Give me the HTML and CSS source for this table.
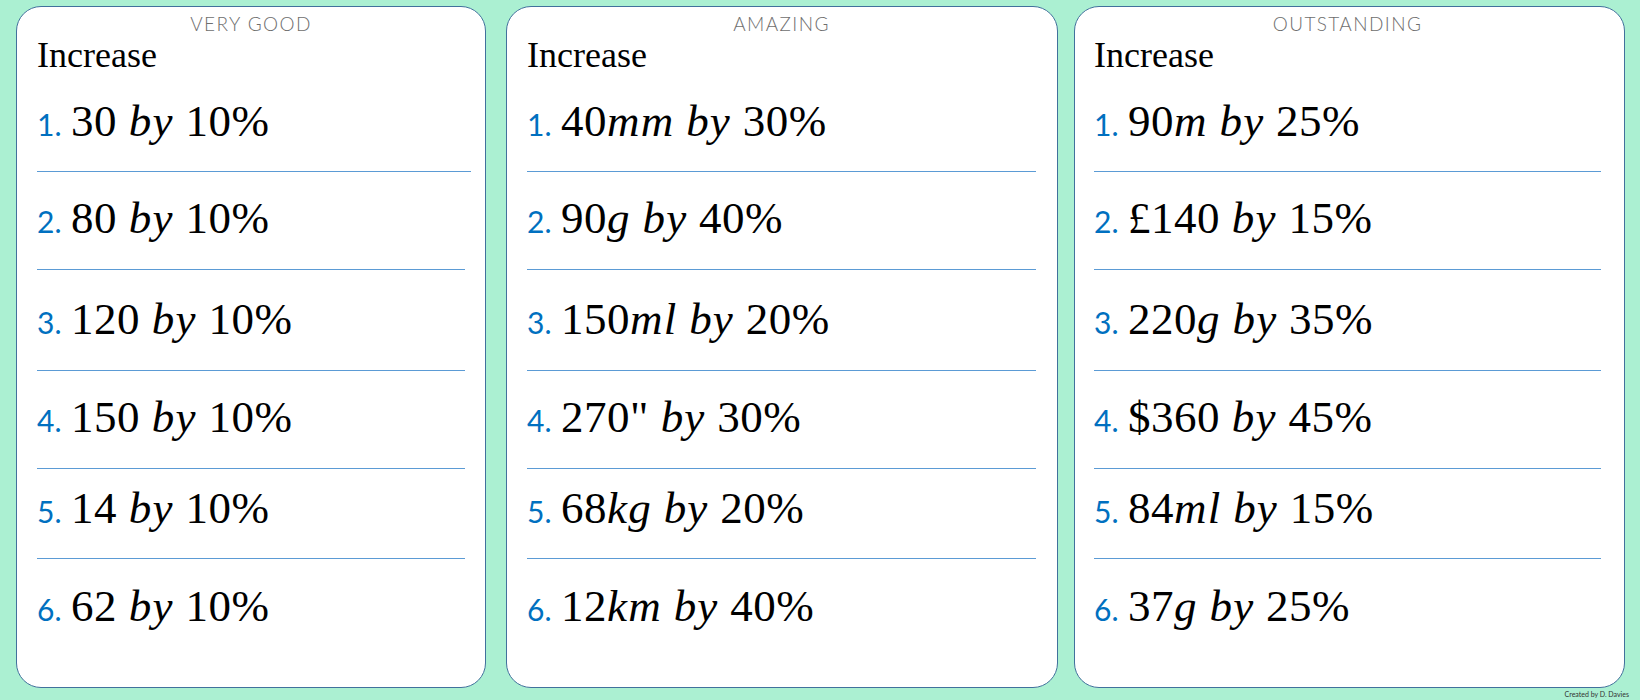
FILE: index.html
```html
<!DOCTYPE html>
<html lang="en">
<head>
<meta charset="utf-8">
<title>Increase by a percentage</title>
<link rel="stylesheet" href="styles.css">
</head>
<body>
<main class="sheet">
  <div class="cards">
    <section class="card card-1">
      <h2 class="level">VERY GOOD</h2>
      <p class="prompt">Increase</p>
      <ol class="rows">
        <li class="row"><span class="num">1.</span><span class="expr">30 <i>by</i> 10%</span></li>
        <li class="row"><span class="num">2.</span><span class="expr">80 <i>by</i> 10%</span></li>
        <li class="row"><span class="num">3.</span><span class="expr">120 <i>by</i> 10%</span></li>
        <li class="row"><span class="num">4.</span><span class="expr">150 <i>by</i> 10%</span></li>
        <li class="row"><span class="num">5.</span><span class="expr">14 <i>by</i> 10%</span></li>
        <li class="row"><span class="num">6.</span><span class="expr">62 <i>by</i> 10%</span></li>
      </ol>
    </section>
    <section class="card card-2">
      <h2 class="level">AMAZING</h2>
      <p class="prompt">Increase</p>
      <ol class="rows">
        <li class="row"><span class="num">1.</span><span class="expr">40<i>mm</i> <i>by</i> 30%</span></li>
        <li class="row"><span class="num">2.</span><span class="expr">90<i>g</i> <i>by</i> 40%</span></li>
        <li class="row"><span class="num">3.</span><span class="expr">150<i>ml</i> <i>by</i> 20%</span></li>
        <li class="row"><span class="num">4.</span><span class="expr">270" <i>by</i> 30%</span></li>
        <li class="row"><span class="num">5.</span><span class="expr">68<i>kg</i> <i>by</i> 20%</span></li>
        <li class="row"><span class="num">6.</span><span class="expr">12<i>km</i> <i>by</i> 40%</span></li>
      </ol>
    </section>
    <section class="card card-3">
      <h2 class="level">OUTSTANDING</h2>
      <p class="prompt">Increase</p>
      <ol class="rows">
        <li class="row"><span class="num">1.</span><span class="expr">90<i>m</i> <i>by</i> 25%</span></li>
        <li class="row"><span class="num">2.</span><span class="expr">£140 <i>by</i> 15%</span></li>
        <li class="row"><span class="num">3.</span><span class="expr">220<i>g</i> <i>by</i> 35%</span></li>
        <li class="row"><span class="num">4.</span><span class="expr">$360 <i>by</i> 45%</span></li>
        <li class="row"><span class="num">5.</span><span class="expr">84<i>ml</i> <i>by</i> 15%</span></li>
        <li class="row"><span class="num">6.</span><span class="expr">37<i>g</i> <i>by</i> 25%</span></li>
      </ol>
    </section>
  </div>
  <footer class="credit">Created by D. Davies</footer>
</main>
</body>
</html>
```

FILE: styles.css
```css
html, body {
  margin: 0;
  padding: 0;
}

body {
  width: 1640px;
  height: 700px;
  overflow: hidden;
  background: #abf0d2;
  font-family: "Liberation Serif", serif;
}

.sheet {
  display: flex;
  flex-direction: column;
  height: 700px;
  box-sizing: border-box;
  padding-top: 6px;
}

.cards {
  display: flex;
  padding-left: 16px;
}

.card {
  box-sizing: border-box;
  height: 682px;
  background: #ffffff;
  border: 1px solid #41719c;
  border-radius: 25px;
  padding: 6px 20px 0 20px;
}

.card-1 { width: 470px; }
.card-2 { width: 552px; margin-left: 20px; padding-right: 21px; }
.card-3 { width: 551px; margin-left: 16px; padding-left: 19px; padding-right: 23px; }

.level {
  margin: 0;
  font-family: "Lato", "Liberation Sans", sans-serif;
  font-weight: 300;
  font-size: 19px;
  line-height: 22px;
  letter-spacing: 1.4px;
  color: #6e6e6e;
  text-align: center;
}

.prompt {
  margin: 0;
  font-family: "Liberation Serif", serif;
  font-size: 36px;
  line-height: 40px;
  color: #000000;
}

.rows {
  list-style: none;
  margin: 0;
  padding: 0;
}

.row {
  display: flex;
  align-items: baseline;
  padding: 24px 0 28px 0;
  border-bottom: 1px solid #5b9bd5;
}

.row:nth-child(1) { padding-bottom: 27px; }
.row:nth-child(3) { padding-top: 27px; }
.row:nth-child(5) { padding-top: 17px; padding-bottom: 27px; }
.row:nth-child(6) { padding-top: 25px; border-bottom: none; }

.card-1 .row:nth-child(1) { margin-right: -6px; }

.num {
  flex: 0 0 34px;
  font-family: "Lato", "Liberation Sans", sans-serif;
  font-size: 30px;
  line-height: 30px;
  color: #0070c0;
}

.expr {
  font-family: "Liberation Serif", serif;
  font-size: 45px;
  line-height: 45px;
  letter-spacing: 0.5px;
  color: #000000;
  white-space: nowrap;
}

.expr i {
  font-style: italic;
  letter-spacing: 1.2px;
}

.credit {
  font-family: "Lato", "Liberation Sans", sans-serif;
  font-size: 7px;
  line-height: 12px;
  color: #333333;
  text-align: right;
  padding-right: 11px;
}
```
